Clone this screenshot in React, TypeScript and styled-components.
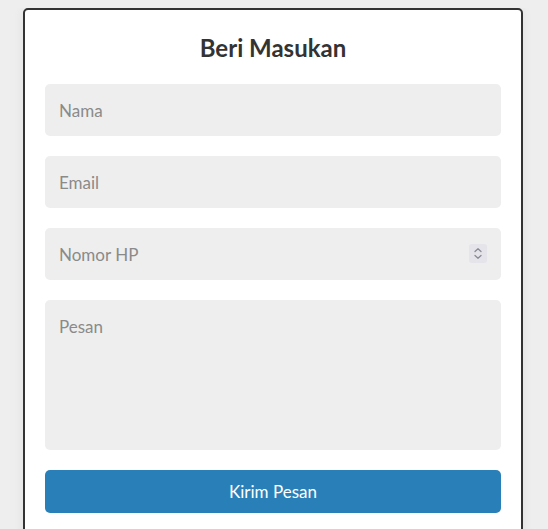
import styled, { createGlobalStyle } from 'styled-components';

const GlobalStyle = createGlobalStyle`
    body {
        margin: 8px 0 0;
        background: #eeeeee;
        font-family: "Lato", "Noto Sans", sans-serif;
    }
`;

const Card = styled.form`
    box-sizing: border-box;
    width: 500px;
    margin: 0 0 0 23px;
    padding: 20px 20px 30px;
    background: #ffffff;
    border: 2px solid #333333;
    border-radius: 5px;
    box-shadow: 0 0 12px rgba(0, 0, 0, 0.06);
    display: flex;
    flex-direction: column;
    gap: 20px;
`;

const Title = styled.h2`
    margin: 2px 0 0;
    text-align: center;
    font-size: 24px;
    line-height: 32px;
    font-weight: 700;
    color: #333333;
`;

const fieldStyles = `
    box-sizing: border-box;
    width: 100%;
    border: none;
    border-radius: 5px;
    background: #eeeeee;
    padding: 0 14px;
    font-family: "Lato", "Noto Sans", sans-serif;
    font-size: 17px;
    color: #333333;
    outline: none;

    &::placeholder {
        color: #8a8a8a;
    }
`;

const Input = styled.input`
    ${fieldStyles}
    height: 52px;
    display: block;

    &::-webkit-inner-spin-button,
    &::-webkit-outer-spin-button {
        -webkit-appearance: none;
        margin: 0;
    }
`;

const NumberField = styled.div`
    position: relative;
`;

const Spinner = styled.span`
    position: absolute;
    top: 16px;
    right: 14px;
    width: 18px;
    height: 19px;
    border-radius: 3px;
    background: #e4e4ea;
    display: flex;
    align-items: center;
    justify-content: center;
    pointer-events: none;
`;

const TextArea = styled.textarea`
    ${fieldStyles}
    height: 150px;
    padding-top: 16px;
    resize: none;
    display: block;
`;

const Button = styled.button`
    height: 43px;
    border: none;
    border-radius: 5px;
    background: #2980b9;
    color: #ffffff;
    font-family: "Lato", "Noto Sans", sans-serif;
    font-size: 17px;
    cursor: pointer;
`;

export default function App() {
    return (
        <>
            <GlobalStyle />
            <Card onSubmit={(e) => e.preventDefault()}>
                <Title>Beri Masukan</Title>
                <Input type="text" placeholder="Nama" />
                <Input type="email" placeholder="Email" />
                <NumberField>
                    <Input type="number" placeholder="Nomor HP" />
                    <Spinner>
                        <svg width="10" height="13" viewBox="0 0 10 13" fill="none" stroke="#8a8a96" strokeWidth="1.3" strokeLinecap="round" strokeLinejoin="round">
                            <path d="M2 4.5 L5 1.8 L8 4.5" />
                            <path d="M2 8.5 L5 11.2 L8 8.5" />
                        </svg>
                    </Spinner>
                </NumberField>
                <TextArea placeholder="Pesan" />
                <Button type="submit">Kirim Pesan</Button>
            </Card>
        </>
    );
}
